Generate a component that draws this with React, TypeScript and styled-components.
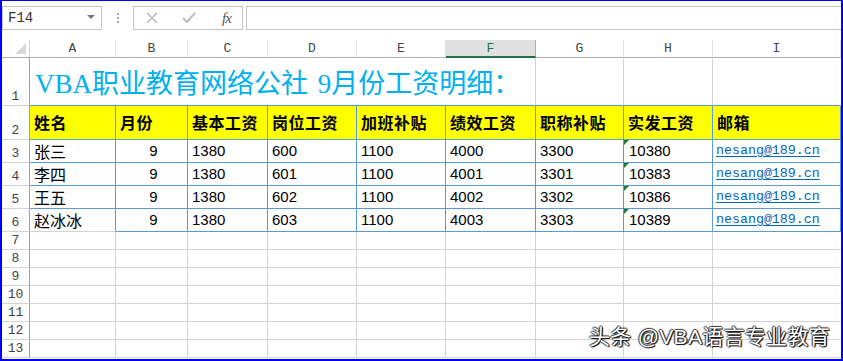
import React from 'react';
import styled, { createGlobalStyle } from 'styled-components';

const GlobalStyle = createGlobalStyle`
  html, body {
    margin: 0;
    padding: 0;
    background: #ffffff;
  }
`;

const GRID = '#d4d4d4';
const TABLE_BLUE = '#5b9bd5';
const CJK = '"Noto Sans CJK SC", "Liberation Sans", sans-serif';
const MONO = '"Liberation Mono", "DejaVu Sans Mono", monospace';

const Frame = styled.div`
  position: relative;
  width: 843px;
  height: 361px;
  box-sizing: border-box;
  border-style: solid;
  border-color: #0000ff;
  border-width: 1px 2px 2px 2px;
  background: #ffffff;
  overflow: hidden;
  display: flex;
  flex-direction: column;
`;

const FormulaBar = styled.div`
  height: 39px;
  box-sizing: border-box;
  padding-top: 5px;
  display: flex;
  align-items: flex-start;
`;

const NameBox = styled.div`
  width: 100px;
  height: 24px;
  box-sizing: border-box;
  border: 1px solid #c6c6c6;
  display: flex;
  align-items: center;
  justify-content: space-between;
  padding: 0 6px 0 5px;
  font-family: ${MONO};
  font-size: 14px;
  color: #333;
`;

const DropArrow = styled.span`
  width: 0;
  height: 0;
  border-left: 4px solid transparent;
  border-right: 4px solid transparent;
  border-top: 4px solid #777;
  margin-top: -3px;
`;

const Dots = styled.div`
  width: 31px;
  height: 24px;
  display: flex;
  flex-direction: column;
  align-items: center;
  justify-content: center;
  gap: 2px;

  span {
    width: 2px;
    height: 2px;
    background: #a8a8a8;
  }
`;

const ButtonBox = styled.div`
  width: 110px;
  height: 24px;
  box-sizing: border-box;
  border: 1px solid #c6c6c6;
  display: flex;
  align-items: center;
  padding-left: 12px;
  gap: 24px;
`;

const FxLabel = styled.span`
  font-family: "Liberation Serif", serif;
  font-style: italic;
  font-size: 15px;
  color: #555;
  letter-spacing: -1px;
  margin-left: 2px;
`;

const FormulaInput = styled.div`
  flex: 1;
  height: 24px;
  margin-left: 3px;
  box-sizing: border-box;
  border-top: 1px solid #c6c6c6;
  border-bottom: 1px solid #c6c6c6;
  border-left: 1px solid #c6c6c6;
`;

const Sheet = styled.div`
  display: grid;
  grid-template-columns: 28px 86px 72px 80px 89px 89px 90px 88px 89px 1fr;
  grid-template-rows: 18px 48px 34px repeat(4, 23px) repeat(7, 18px);
`;

const Corner = styled.div`
  position: relative;
  box-sizing: border-box;
  border-right: 1px solid ${GRID};
  border-bottom: 1px solid #ababab;

  svg {
    position: absolute;
    right: 3px;
    bottom: 3px;
  }
`;

const ColHeader = styled.div<{ $active?: boolean }>`
  box-sizing: border-box;
  display: flex;
  align-items: center;
  justify-content: center;
  font-family: ${MONO};
  font-size: 13px;
  color: ${(p) => (p.$active ? '#217346' : '#444')};
  background: ${(p) => (p.$active ? '#e1e1e1' : '#ffffff')};
  border-right: 1px solid ${(p) => (p.$active ? '#ababab' : '#e1e1e1')};
  border-bottom: ${(p) => (p.$active ? '2px solid #217346' : '1px solid #ababab')};
`;

const RowHeader = styled.div`
  box-sizing: border-box;
  display: flex;
  align-items: flex-end;
  justify-content: center;
  padding-bottom: 1px;
  font-family: ${MONO};
  font-size: 13px;
  line-height: 15px;
  color: #444;
  border-right: 1px solid #9f9f9f;
  border-bottom: 1px solid ${GRID};
`;

type CellKind = 'title' | 'head' | 'name' | 'num' | 'mail';

const Cell = styled.div<{
  $span?: number;
  $right?: string;
  $bottom?: string;
  $kind?: CellKind;
  $center?: boolean;
  $flag?: boolean;
}>`
  position: relative;
  box-sizing: border-box;
  grid-column: span ${(p) => p.$span ?? 1};
  display: flex;
  align-items: flex-end;
  justify-content: ${(p) => (p.$center ? 'center' : 'flex-start')};
  padding: 0 0 2px 4px;
  white-space: nowrap;
  overflow: visible;
  border-right: 1px solid ${(p) => p.$right ?? GRID};
  border-bottom: 1px solid ${(p) => p.$bottom ?? GRID};
  background: ${(p) => (p.$kind === 'head' ? '#ffff00' : 'transparent')};
  color: #000;
  font-family: "Liberation Sans", Arial, sans-serif;
  font-size: 15px;
  line-height: 18px;

  ${(p) =>
    p.$kind === 'title' &&
    `
    font-family: "Liberation Serif", ${CJK};
    font-size: 27px;
    line-height: 32px;
    color: #00b0f0;
    padding-bottom: 5px;
    padding-left: 5px;
    word-spacing: 3px;
  `}

  ${(p) =>
    p.$kind === 'head' &&
    `
    font-family: ${CJK};
    font-weight: 700;
    font-size: 16px;
    line-height: 20px;
    letter-spacing: 0.5px;
    padding-bottom: 7px;
  `}

  ${(p) =>
    p.$kind === 'name' &&
    `
    font-family: ${CJK};
    font-size: 16px;
    line-height: 20px;
    padding-bottom: 1px;
  `}

  ${(p) =>
    p.$kind === 'mail' &&
    `
    font-family: ${MONO};
    font-size: 13.3px;
    padding-left: 3px;
  `}

  ${(p) =>
    p.$flag &&
    `
    padding-left: 5px;
    &::before {
      content: '';
      position: absolute;
      left: 0;
      top: 0;
      border-top: 5px solid #1e7b34;
      border-right: 5px solid transparent;
    }
  `}
`;

const MailLink = styled.span`
  color: #0563c1;
  text-decoration: underline;
  text-underline-offset: 2px;
`;

const Watermark = styled.div`
  position: absolute;
  right: 11px;
  bottom: 9px;
  font-family: "Liberation Sans", ${CJK};
  font-size: 21px;
  color: #ffffff;
  letter-spacing: 0.3px;
  text-shadow:
    1px 1px 1px #000,
    -1px 0 1px #333,
    0 -1px 1px #333,
    1px 0 1px #333;
`;

const columns = ['A', 'B', 'C', 'D', 'E', 'F', 'G', 'H', 'I'];
const headers = ['姓名', '月份', '基本工资', '岗位工资', '加班补贴', '绩效工资', '职称补贴', '实发工资', '邮箱'];

const people = [
  { name: '张三', month: 9, base: 1380, post: 600, extra: 1100, perf: 4000, grade: 3300, pay: 10380 },
  { name: '李四', month: 9, base: 1380, post: 601, extra: 1100, perf: 4001, grade: 3301, pay: 10383 },
  { name: '王五', month: 9, base: 1380, post: 602, extra: 1100, perf: 4002, grade: 3302, pay: 10386 },
  { name: '赵冰冰', month: 9, base: 1380, post: 603, extra: 1100, perf: 4003, grade: 3303, pay: 10389 },
];

const CrossIcon = () => (
  <svg width="12" height="12" viewBox="0 0 12 12">
    <path d="M1 1 L11 11 M11 1 L1 11" stroke="#bcbcbc" strokeWidth="1.6" fill="none" />
  </svg>
);

const CheckIcon = () => (
  <svg width="14" height="12" viewBox="0 0 14 12">
    <path d="M1 6 L5 10 L13 1" stroke="#bcbcbc" strokeWidth="2" fill="none" />
  </svg>
);

export default function App() {
  return (
    <>
      <GlobalStyle />
      <Frame>
        <FormulaBar>
          <NameBox>
            F14
            <DropArrow />
          </NameBox>
          <Dots>
            <span />
            <span />
            <span />
          </Dots>
          <ButtonBox>
            <CrossIcon />
            <CheckIcon />
            <FxLabel>fx</FxLabel>
          </ButtonBox>
          <FormulaInput />
        </FormulaBar>

        <Sheet>
          <Corner>
            <svg width="11" height="11" viewBox="0 0 11 11">
              <polygon points="11,0 11,11 0,11" fill="#dadada" />
            </svg>
          </Corner>
          {columns.map((c) => (
            <ColHeader key={c} $active={c === 'F'}>
              {c}
            </ColHeader>
          ))}

          <RowHeader>1</RowHeader>
          <Cell $span={6} $kind="title" $bottom={TABLE_BLUE}>
            VBA职业教育网络公社 9月份工资明细：
          </Cell>
          <Cell $bottom={TABLE_BLUE} />
          <Cell $bottom={TABLE_BLUE} />
          <Cell $bottom={TABLE_BLUE} $right="transparent" />

          <RowHeader>2</RowHeader>
          {headers.map((h) => (
            <Cell key={h} $kind="head" $right={TABLE_BLUE} $bottom={TABLE_BLUE}>
              {h}
            </Cell>
          ))}

          {people.map((p, i) => (
            <React.Fragment key={p.name}>
              <RowHeader>{i + 3}</RowHeader>
              <Cell $kind="name" $right={TABLE_BLUE} $bottom={i === 3 ? GRID : TABLE_BLUE}>
                {p.name}
              </Cell>
              <Cell $center $right={TABLE_BLUE} $bottom={TABLE_BLUE}>
                {p.month}
              </Cell>
              <Cell $right={TABLE_BLUE} $bottom={TABLE_BLUE}>{p.base}</Cell>
              <Cell $right={TABLE_BLUE} $bottom={TABLE_BLUE}>{p.post}</Cell>
              <Cell $right={TABLE_BLUE} $bottom={TABLE_BLUE}>{p.extra}</Cell>
              <Cell $right={TABLE_BLUE} $bottom={TABLE_BLUE}>{p.perf}</Cell>
              <Cell $right={TABLE_BLUE} $bottom={TABLE_BLUE}>{p.grade}</Cell>
              <Cell $flag $right={TABLE_BLUE} $bottom={TABLE_BLUE}>{p.pay}</Cell>
              <Cell $kind="mail" $right={TABLE_BLUE} $bottom={TABLE_BLUE}>
                <MailLink>nesang@189.cn</MailLink>
              </Cell>
            </React.Fragment>
          ))}

          {[7, 8, 9, 10, 11, 12, 13].map((r) => (
            <React.Fragment key={r}>
              <RowHeader>{r}</RowHeader>
              {columns.map((c) => (
                <Cell key={c} $right={c === 'I' ? 'transparent' : GRID} />
              ))}
            </React.Fragment>
          ))}
        </Sheet>

        <Watermark>头条 @VBA语言专业教育</Watermark>
      </Frame>
    </>
  );
}
